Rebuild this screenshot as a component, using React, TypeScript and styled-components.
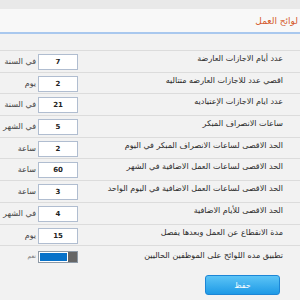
import styled, { createGlobalStyle } from "styled-components";

const GlobalStyle = createGlobalStyle`
  html, body {
    margin: 0;
    padding: 0;
    background: #f2f2f2;
  }
  body {
    font-family: "DejaVu Sans", "Noto Sans", sans-serif;
  }
`;

const Page = styled.div`
  direction: rtl;
  width: 300px;
  height: 300px;
  overflow: hidden;
  background: #f2f2f2;
`;

const TopBar = styled.div`
  height: 9px;
  background: #e9e9e9;
`;

const Header = styled.div`
  height: 23px;
  background: #f8f8f8;
  border-bottom: 2px solid #a9c8ee;
  display: flex;
  align-items: center;
  padding-right: 2px;
`;

const Title = styled.h1`
  margin: 0;
  font-size: 9px;
  font-weight: normal;
  color: #d4582b;
`;

const Form = styled.div`
  padding-top: 16px;
`;

const Row = styled.div`
  display: grid;
  grid-template-columns: 1fr 40px 38px;
  align-items: start;
  height: 20.7px;
  padding-right: 17px;
  border-top: 1px solid #dcdcdc;
`;

const Label = styled.span`
  font-size: 8px;
  color: #2a2a2a;
  white-space: nowrap;
  padding-top: 3px;
`;

const Field = styled.input`
  box-sizing: border-box;
  width: 40px;
  height: 16px;
  margin-top: 3px;
  border: 1px solid #b0bdd0;
  background: #fff;
  text-align: center;
  font-family: "DejaVu Sans", sans-serif;
  font-size: 7px;
  font-weight: bold;
  color: #222;
  padding: 0;
  outline: none;
`;

const Unit = styled.span`
  font-size: 8px;
  color: #444;
  padding-top: 6px;
  padding-right: 2px;
  white-space: nowrap;
`;

const ToggleRow = styled(Row)`
  height: 28px;
`;

const Label2 = styled(Label)`
  padding-top: 5px;
`;

const Switch = styled.div`
  box-sizing: border-box;
  width: 40px;
  height: 12px;
  margin-top: 5px;
  display: flex;
  border: 1px solid #8d99a6;
  background: #666;
`;

const SwitchFill = styled.div`
  flex: 1;
  background: #0872c9;
  border: 1px solid #fff;
  order: 2;
`;

const SwitchKnob = styled.div`
  width: 9px;
  background: #666;
  order: 1;
`;

const YesText = styled.span`
  font-size: 6px;
  color: #777;
  padding-top: 6px;
  padding-right: 2px;
`;

const Actions = styled.div`
  display: flex;
  padding-right: 20px;
  padding-top: 1px;
`;

const SaveButton = styled.button`
  width: 75px;
  height: 20px;
  border: 1px solid #1c86d6;
  border-radius: 3px;
  background: linear-gradient(#5cc4f6, #1e9ae6);
  color: #fff;
  font-family: "DejaVu Sans", sans-serif;
  font-size: 8px;
  cursor: pointer;
`;

const rules = [
  { label: "عدد أيام الاجازات العارضة", value: "7", unit: "في السنة" },
  { label: "اقصي عدد للاجازات العارضه متتاليه", value: "2", unit: "يوم" },
  { label: "عدد ايام الاجازات الإعتياديه", value: "21", unit: "في السنة" },
  { label: "ساعات الانصراف المبكر", value: "5", unit: "في الشهر" },
  { label: "الحد الاقصى لساعات الانصراف المبكر في اليوم", value: "2", unit: "ساعة" },
  { label: "الحد الاقصى لساعات العمل الاضافية في الشهر", value: "60", unit: "ساعة" },
  { label: "الحد الاقصى لساعات العمل الاضافية في اليوم الواحد", value: "3", unit: "ساعة" },
  { label: "الحد الاقصى للأيام الاضافية", value: "4", unit: "في الشهر" },
  { label: "مدة الانقطاع عن العمل وبعدها يفصل", value: "15", unit: "يوم" },
];

export default function App() {
  return (
    <Page>
      <GlobalStyle />
      <TopBar />
      <Header>
        <Title>لوائح العمل</Title>
      </Header>
      <Form>
        {rules.map((r) => (
          <Row key={r.label}>
            <Label>{r.label}</Label>
            <Field defaultValue={r.value} />
            <Unit>{r.unit}</Unit>
          </Row>
        ))}
        <ToggleRow>
          <Label2>تطبيق مده اللوائح على الموظفين الحاليين</Label2>
          <Switch>
            <SwitchKnob />
            <SwitchFill />
          </Switch>
          <YesText>نعم</YesText>
        </ToggleRow>
        <Actions>
          <SaveButton>حفظ</SaveButton>
        </Actions>
      </Form>
    </Page>
  );
}
